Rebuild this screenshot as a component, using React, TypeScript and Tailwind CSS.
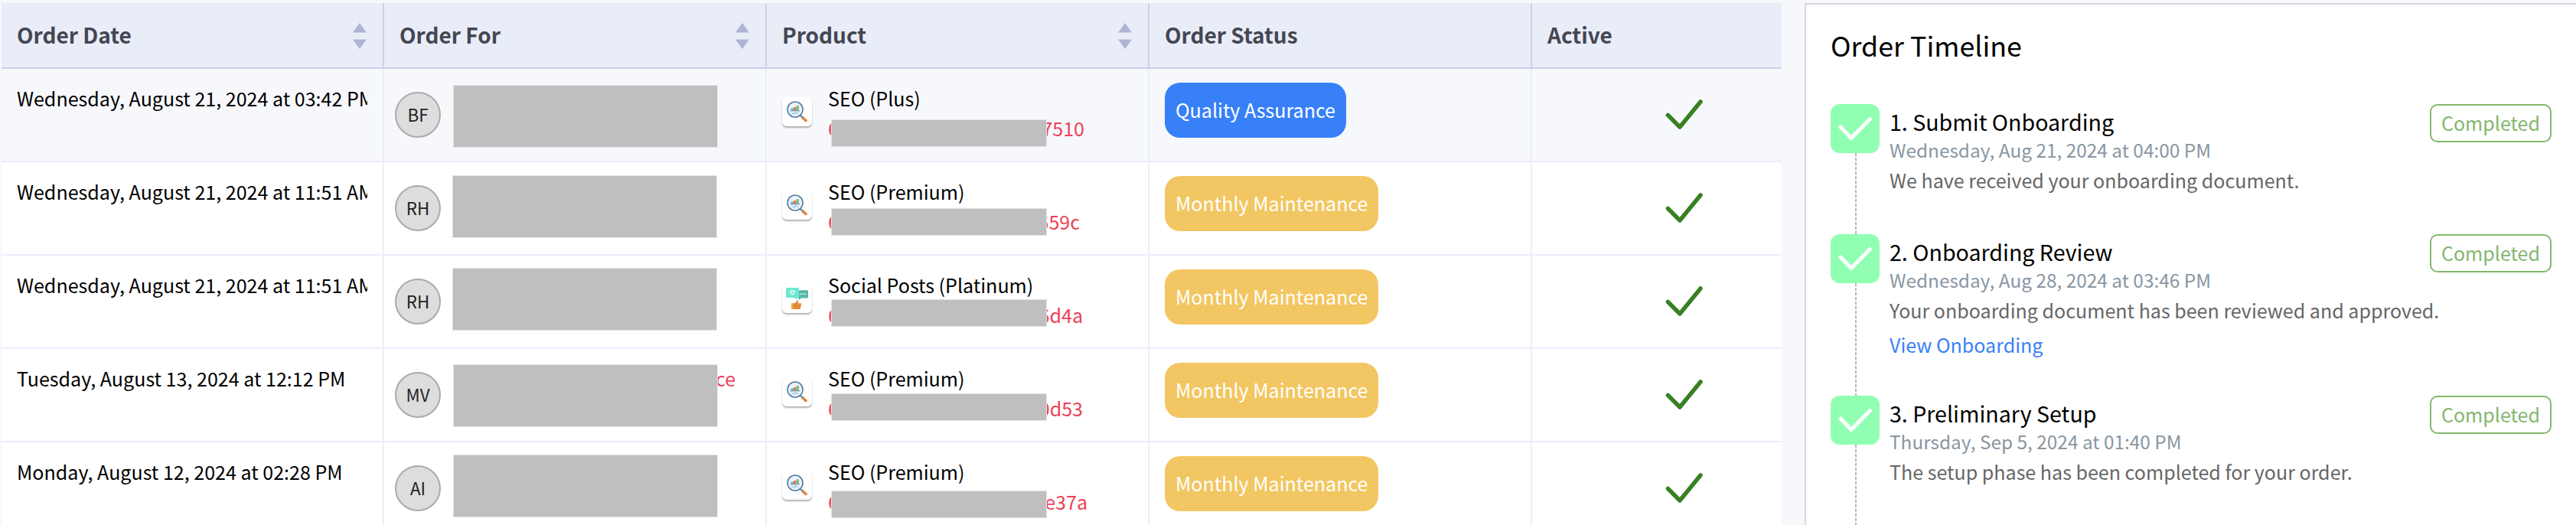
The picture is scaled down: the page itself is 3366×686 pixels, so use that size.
type Order = {
  date: string;
  initials: string;
  company?: string;
  companyMask: string;
  product: string;
  icon: "seo" | "social";
  orderId: string;
  idWidth: string;
  idMask: string;
  status: string;
};

type Step = {
  title: string;
  date: string;
  text: string;
  link?: string;
  height: string;
};

const orders: Order[] = [
  {
    date: "Wednesday, August 21, 2024 at 03:42 PM",
    initials: "BF",
    companyMask: "left-[90px] top-[21px]",
    product: "SEO (Plus)",
    icon: "seo",
    orderId: "7510",
    idWidth: "w-[335px]",
    idMask: "top-[66px]",
    status: "Quality Assurance",
  },
  {
    date: "Wednesday, August 21, 2024 at 11:51 AM",
    initials: "RH",
    companyMask: "left-[89px] top-[17px]",
    product: "SEO (Premium)",
    icon: "seo",
    orderId: "659c",
    idWidth: "w-[329px]",
    idMask: "top-[60px]",
    status: "Monthly Maintenance",
  },
  {
    date: "Wednesday, August 21, 2024 at 11:51 AM",
    initials: "RH",
    companyMask: "left-[89px] top-[16px]",
    product: "Social Posts (Platinum)",
    icon: "social",
    orderId: "6d4a",
    idWidth: "w-[333px]",
    idMask: "top-[57px]",
    status: "Monthly Maintenance",
  },
  {
    date: "Tuesday, August 13, 2024 at 12:12 PM",
    initials: "MV",
    company: "ce",
    companyMask: "left-[90px] top-[20px]",
    product: "SEO (Premium)",
    icon: "seo",
    orderId: "0d53",
    idWidth: "w-[333px]",
    idMask: "top-[58px]",
    status: "Monthly Maintenance",
  },
  {
    date: "Monday, August 12, 2024 at 02:28 PM",
    initials: "AI",
    companyMask: "left-[90px] top-[16px]",
    product: "SEO (Premium)",
    icon: "seo",
    orderId: "e37a",
    idWidth: "w-[339px]",
    idMask: "top-[63px]",
    status: "Monthly Maintenance",
  },
];

const steps: Step[] = [
  {
    title: "1. Submit Onboarding",
    date: "Wednesday, Aug 21, 2024 at 04:00 PM",
    text: "We have received your onboarding document.",
    height: "h-[170px]",
  },
  {
    title: "2. Onboarding Review",
    date: "Wednesday, Aug 28, 2024 at 03:46 PM",
    text: "Your onboarding document has been reviewed and approved.",
    link: "View Onboarding",
    height: "h-[211px]",
  },
  {
    title: "3. Preliminary Setup",
    date: "Thursday, Sep 5, 2024 at 01:40 PM",
    text: "The setup phase has been completed for your order.",
    height: "h-[211px]",
  },
];

const columns = [
  { label: "Order Date", sortable: true },
  { label: "Order For", sortable: true },
  { label: "Product", sortable: true },
  { label: "Order Status", sortable: false },
  { label: "Active", sortable: false },
];

const gridCols = "grid grid-cols-[500px_500px_500px_500px_326px]";

function SortIcon() {
  return (
    <svg width="18" height="34" viewBox="0 0 18 34" fill="#adb5d3">
      <path d="M9 0 18 12.5H0z" />
      <path d="M9 34 18 21.5H0z" />
    </svg>
  );
}

function SeoIcon() {
  return (
    <svg width="28" height="28" viewBox="0 0 28 28" fill="none">
      <path d="M17.500 18.500l3 3" stroke="#52789a" strokeWidth="2" />
      <path d="M20 21l6 5.500" stroke="#e8833a" strokeWidth="3.600" />
      <path d="M22.500 20.500l-2.500 2.500" stroke="#8fae7c" strokeWidth="1.500" />
      <circle cx="11" cy="11" r="10" fill="#eef1f5" stroke="#4f7ea3" strokeWidth="1.600" />
      <path d="M5.500 9.500h3.500v3h-3.500z" fill="#56b5ea" />
      <path d="M9 8h3.500v4.500H9z" fill="#ee7a30" />
      <path d="M12.500 6.200h3.500v6.300h-3.500z" fill="#79bd8c" />
      <path d="M4.500 12.800h12.500" stroke="#5f87ab" strokeWidth="1" />
      <path d="M6 16h3l1 1.500 1.500-3.500 1 2h3" stroke="#6cc5ee" strokeWidth="1" />
    </svg>
  );
}

function SocialIcon() {
  return (
    <svg width="29" height="28" viewBox="0 0 29 28" fill="none">
      <path d="M16 3.300h12a1 1 0 0 1 1 1v8.300a1 1 0 0 1-1 1h-8.500L17.500 16 16 13.600z" fill="#56b9a9" />
      <path d="M1.500 0h14A1.500 1.500 0 0 1 17 1.500v10a1.500 1.500 0 0 1-1.500 1.500h-.7l.2 2.500L10.800 13H1.500A1.500 1.500 0 0 1 0 11.500v-10A1.500 1.500 0 0 1 1.500 0z" fill="#6ee6d1" />
      <path d="M8.500 9 5.800 6.200c-1-2 1.400-3.200 2.700-1.400 1.300-1.800 3.700-.6 2.700 1.400z" stroke="#fff" strokeWidth="1.100" />
      <path d="M18.500 8.300h8" stroke="#e6f7f4" strokeWidth="1.600" strokeDasharray="1.800 1.200" />
      <path d="M9.500 20.200h2.200l1.800-2 .6-2c1.500-.4 2.200.8 1.600 4h3.200c1 0 1.300.8 1 1.700l-1 5.100c-.2.700-.6 1-1.300 1H9.500z" fill="#e28a3c" />
      <path d="M7 20.200h3V28H7z" fill="#eca646" />
    </svg>
  );
}

function OrderRow({ order, highlighted }: { order: Order; highlighted: boolean }) {
  const cell = "h-[122px] border-b-2 border-r-2 border-[#e9eef9]";

  return (
    <div className={`${gridCols} ${highlighted ? "bg-[#f7f8fc]" : "bg-white"}`}>
      <div className={`${cell} px-5 pt-[19px]`}>
        <p className="overflow-hidden whitespace-nowrap leading-[39px]">{order.date}</p>
      </div>

      <div className={`${cell} relative flex items-start pl-3.5 pt-[30px]`}>
        <div className="flex h-[60px] w-[60px] items-center justify-center rounded-full border-2 border-[#aaaaaa] bg-[#dddddd] text-[22.4px] text-[#222222]">
          {order.initials}
        </div>
        {order.company && (
          <span className="-mt-[11px] ml-[359px] leading-[39px] text-[#ee4057]">{order.company}</span>
        )}
        <div className={`absolute h-[82px] w-[346px] border border-[#e4e4e4] bg-[#bfbfbf] ${order.companyMask}`} />
      </div>

      <div className={`${cell} relative flex items-start pl-5`}>
        <div className="mt-[37px] flex h-[38px] w-[39px] items-center justify-center rounded-md bg-white shadow-[0_2px_2px_rgba(0,0,0,0.3)]">
          {order.icon === "seo" ? <SeoIcon /> : <SocialIcon />}
        </div>
        <div className="ml-[21px] pt-[19px] leading-[39px]">
          <p>{order.product}</p>
          <p className={`flex justify-between text-[#ee4057] ${order.idWidth}`}>
            <span>6</span>
            <span>{order.orderId}</span>
          </p>
        </div>
        <div className={`absolute left-[84px] h-[36px] w-[282px] border border-[#e4e4e4] bg-[#bfbfbf] ${order.idMask}`} />
      </div>

      <div className={`${cell} pl-5 pt-[18px]`}>
        <div
          className={`h-[72px] w-fit rounded-[20px] px-[14px] leading-[71px] text-white ${
            order.status === "Quality Assurance" ? "bg-[#3880f8]" : "bg-[#f2c662]"
          }`}
        >
          {order.status}
        </div>
      </div>

      <div className="flex h-[122px] items-center justify-center border-b-2 border-[#e9eef9] pl-[72px]">
        <svg width="50" height="46" viewBox="0 0 50 46" fill="none">
          <path d="M3.500 23.500 19 39 46 6" stroke="#388022" strokeWidth="5.500" strokeLinecap="round" strokeLinejoin="round" />
        </svg>
      </div>
    </div>
  );
}

function TimelineStep({ step }: { step: Step }) {
  return (
    <div className={`flex ${step.height}`}>
      <div className="flex w-16 shrink-0 flex-col items-center">
        <div className="flex h-16 w-16 shrink-0 items-center justify-center rounded-xl bg-[#91ffb2]">
          <svg width="46" height="34" viewBox="0 0 46 34" fill="none">
            <path d="M2.500 13.500 18 29.500 44 3" stroke="#fff" strokeWidth="5" />
          </svg>
        </div>
        <div className="ml-0.5 w-0.5 flex-1 bg-[repeating-linear-gradient(#b9b9b9_0_4px,transparent_4px_6px)]" />
      </div>
      <div className="ml-[13px] min-w-0 flex-1 whitespace-nowrap pt-px">
        <h3 className="text-[28.6px] leading-[44px] text-black">{step.title}</h3>
        <p className="text-[24.4px] leading-[30px] text-[#8996a3]">{step.date}</p>
        <p className="mt-[3px] leading-[42px] text-[#666666]">{step.text}</p>
        {step.link && <a className="mt-[3px] block leading-[42px] text-[#3880f8]">{step.link}</a>}
      </div>
      <span className="h-[50px] shrink-0 rounded-[10px] border-2 border-[#83b76d] px-[13px] leading-[45px] text-[#83b76d]">
        Completed
      </span>
    </div>
  );
}

export default function App() {
  return (
    <main className="flex h-[686px] w-[3366px] overflow-hidden bg-[#f7f8fc] pl-0.5 pt-1 font-['Noto_Sans_CJK_SC','Noto_Sans',sans-serif] text-[25.06px] text-black">
      <section className="w-[2326px] shrink-0">
        <div className={`${gridCols} bg-[#e9edf8]`}>
          {columns.map((column, i) => (
            <div
              key={column.label}
              className={`flex h-[86px] items-center justify-between border-b-2 border-[#cbd2e4] pb-[13px] pl-5 pr-[21px] pt-[15px] ${
                i < 4 ? "border-r-2" : ""
              }`}
            >
              <span className="-mt-1 text-[28px] font-bold text-[#444652]">{column.label}</span>
              {column.sortable && <SortIcon />}
            </div>
          ))}
        </div>
        {orders.map((order, i) => (
          <OrderRow key={i} order={order} highlighted={i === 0} />
        ))}
      </section>

      <aside className="ml-[30px] min-w-0 flex-1 border-l-2 border-t-2 border-[#d7d8da] bg-white px-8">
        <h2 className="h-[130px] pt-6 text-[35.8px] leading-[56px]">Order Timeline</h2>
        {steps.map((step) => (
          <TimelineStep key={step.title} step={step} />
        ))}
      </aside>
    </main>
  );
}
